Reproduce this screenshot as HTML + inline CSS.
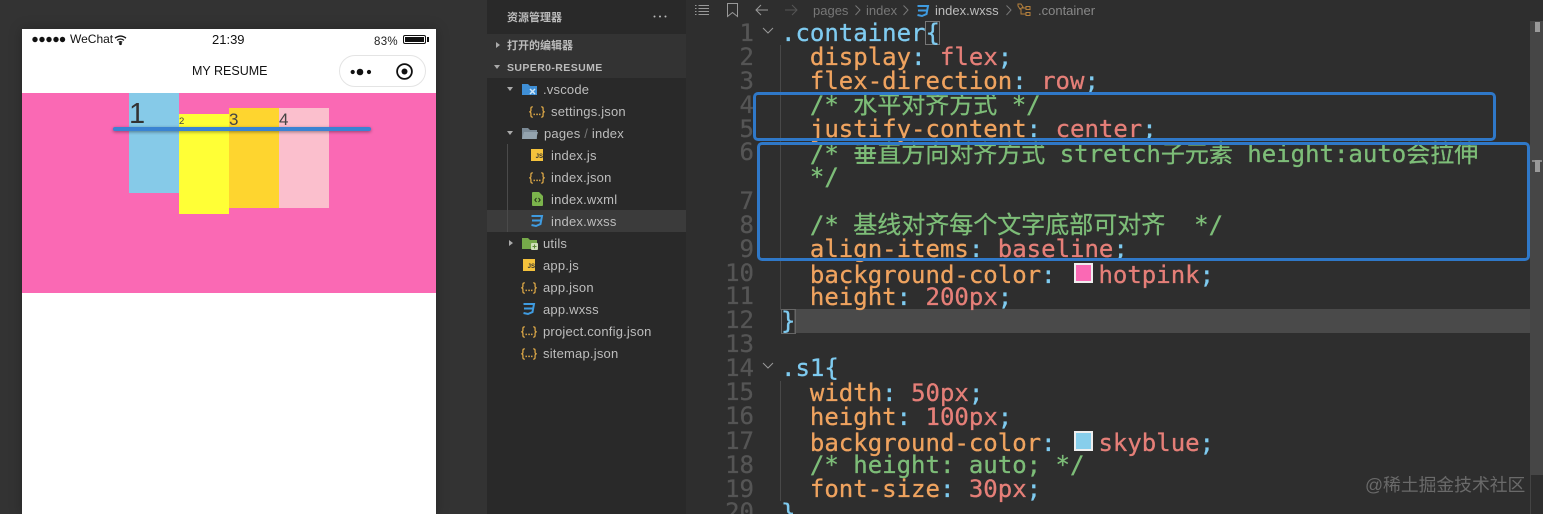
<!DOCTYPE html>
<html><head><meta charset="utf-8">
<style>
html,body{margin:0;padding:0;width:1543px;height:514px;overflow:hidden;background:#333;}
body{position:relative;font-family:"Liberation Sans","Noto Sans CJK SC",sans-serif;}
.a{position:absolute;}
.t{position:absolute;white-space:pre;}
.c{position:absolute;left:781px;white-space:pre;font:24px/24px "DejaVu Sans Mono","Noto Sans CJK SC",monospace;color:#7fcbf0;-webkit-text-stroke:.3px currentColor;}
.n{position:absolute;left:700px;width:54px;text-align:right;font:24px/24px "DejaVu Sans Mono",monospace;color:#555;-webkit-text-stroke:.3px #555;}
.p{color:#efa35f}.v{color:#e57f78}.g{color:#7dbd78}.b{color:#7fcbf0}
.f{position:absolute;white-space:pre;font-size:13px;line-height:22px;letter-spacing:.2px;color:#bdbdbd;margin-top:1px;}
.cn{position:absolute;white-space:pre;font-size:10.5px;line-height:22px;color:#bbb;font-weight:bold;margin-top:1px;}
.j{position:absolute;white-space:pre;font:12px/14px "Liberation Sans";color:#e8b04a;letter-spacing:-.5px;-webkit-text-stroke:.2px #e8b04a;}
svg{position:absolute;overflow:visible;}
</style></head><body>

<!-- phone -->
<div class="a" style="left:22px;top:29px;width:414px;height:485px;background:#fff;box-shadow:0 0 12px rgba(0,0,0,.25)"></div>
<svg style="left:32px;top:36px" width="34" height="8"><g fill="#111"><circle cx="3" cy="3.500" r="2.700"/><circle cx="10" cy="3.500" r="2.700"/><circle cx="17" cy="3.500" r="2.700"/><circle cx="24" cy="3.500" r="2.700"/><circle cx="30.500" cy="3.500" r="2.700"/></g></svg>
<div class="t" style="left:70px;top:32px;font-size:12px;line-height:15px;color:#111">WeChat</div>
<svg style="left:114px;top:35px" width="13" height="10" fill="none" stroke="#111" stroke-width="1.300"><path d="M1 3.200Q6.500-1 12 3.200M3 5.400Q6.500 2.600 10 5.400M4.800 7.300Q6.500 6 8.200 7.300"/><circle cx="6.500" cy="8.800" r=".7" fill="#111"/></svg>
<div class="t" style="left:212px;top:31px;font-size:13px;line-height:17px;color:#111">21:39</div>
<div class="t" style="left:374px;top:35px;font-size:11.500px;line-height:14px;letter-spacing:.3px;color:#222">83%</div>
<div class="a" style="left:403px;top:35px;width:21px;height:7px;border:1px solid #111;border-radius:2px;"></div>
<div class="a" style="left:405px;top:37px;width:19px;height:5px;background:#111"></div>
<div class="a" style="left:427px;top:37px;width:2px;height:5px;background:#111"></div>
<div class="t" style="left:192px;top:63px;font-size:12.500px;line-height:17px;color:#111">MY RESUME</div>
<div class="a" style="left:339px;top:55px;width:87px;height:32px;box-sizing:border-box;border:1px solid #e4e4e4;border-radius:16px;background:#fff"></div>
<svg style="left:350px;top:62px" width="22" height="18" fill="#111"><circle cx="2.700" cy="10" r="2.100"/><circle cx="10" cy="10" r="3.300"/><circle cx="19" cy="10" r="2.100"/></svg>
<svg style="left:395px;top:62px" width="20" height="20" fill="none"><circle cx="9.500" cy="9.500" r="7.400" stroke="#111" stroke-width="1.800"/><circle cx="9.500" cy="9.500" r="3" fill="#111"/></svg>

<div class="a" style="left:22px;top:93px;width:414px;height:200px;background:#fa69b4"></div>
<div class="a" style="left:129px;top:93px;width:50px;height:100px;background:#86cae8"></div>
<div class="a" style="left:179px;top:114px;width:50px;height:100px;background:#ffff36"></div>
<div class="a" style="left:229px;top:108px;width:50px;height:100px;background:#fed52f"></div>
<div class="a" style="left:279px;top:108px;width:50px;height:100px;background:#fbbfcd"></div>
<div class="t" style="left:129px;top:98px;font-size:29px;line-height:33px;color:#333">1</div>
<div class="t" style="left:179px;top:116px;font-size:9.500px;line-height:12px;color:#444">2</div>
<div class="t" style="left:229px;top:110px;font-size:17px;line-height:19px;color:#444">3</div>
<div class="t" style="left:279px;top:110px;font-size:17px;line-height:19px;color:#444">4</div>
<div class="a" style="left:113px;top:127px;width:258px;height:4px;border-radius:2px;background:#3a83d2;box-shadow:0 1px 3px rgba(0,0,0,.4)"></div>

<!-- sidebar -->
<div class="a" style="left:487px;top:0;width:199px;height:514px;background:#292929"></div>
<div class="a" style="left:487px;top:34px;width:199px;height:44px;background:#333"></div>
<div class="a" style="left:487px;top:210px;width:199px;height:22px;background:#3b3b3b"></div>
<div class="a" style="left:507px;top:144px;width:1px;height:88px;background:#4a4a4a"></div>
<div class="cn" style="left:507px;top:6px;font-size:11px">资源管理器</div>
<svg style="left:653px;top:15px" width="14" height="3" fill="#bbb"><circle cx="1.500" cy="1.500" r="1"/><circle cx="7" cy="1.500" r="1"/><circle cx="12.500" cy="1.500" r="1"/></svg>
<div class="cn" style="left:507px;top:34px;font-size:11px">打开的编辑器</div>
<div class="cn" style="left:507px;top:56px;letter-spacing:.4px">SUPER0-RESUME</div>
<svg style="left:0;top:0" width="530" height="260" fill="#aaa"><path d="M496 42l4 3-4 3zM494 65h6l-3 4zM507 87h6l-3 4zM507 131h6l-3 4zM509 240l4 3-4 3z"/></svg>

<svg style="left:522px;top:83px" width="16" height="13"><path d="M0 1h6l2 2h7v9H0z" fill="#3f8fd6"/><path d="M8 6l5 5M13 6l-5 5" stroke="#cfe6f8" stroke-width="1.500"/></svg>
<div class="f" style="left:543px;top:78px">.vscode</div>
<div class="f" style="left:551px;top:100px">settings.json</div>
<svg style="left:522px;top:127px" width="16" height="13"><path d="M0 1h6l2 2h7v9H0z" fill="#7b8a96"/><path d="M2 5h14l-2 7H0z" fill="#93a3ae"/></svg>
<div class="f" style="left:544px;top:122px">pages <span style="color:#777">/</span> index</div>
<div class="f" style="left:551px;top:144px">index.js</div>
<div class="f" style="left:551px;top:166px">index.json</div>
<div class="f" style="left:551px;top:188px">index.wxml</div>
<div class="f" style="left:551px;top:210px">index.wxss</div>
<svg style="left:522px;top:237px" width="16" height="13"><path d="M0 1h6l2 2h7v9H0z" fill="#76a94a"/><rect x="9" y="6" width="7" height="7" rx="1" fill="#cfe0b8"/><path d="M12.500 7.500v4M10.500 9.500h4" stroke="#5d8a36"/></svg>
<div class="f" style="left:543px;top:232px">utils</div>
<div class="f" style="left:543px;top:254px">app.js</div>
<div class="f" style="left:543px;top:276px">app.json</div>
<div class="f" style="left:543px;top:298px">app.wxss</div>
<div class="f" style="left:543px;top:320px">project.config.json</div>
<div class="f" style="left:543px;top:342px">sitemap.json</div>

<!-- js icons -->
<div class="a" style="left:531px;top:149px;width:12px;height:12px;background:#f4c23c;color:#333;font:bold 6px/16px 'Liberation Sans';text-align:right">JS</div>
<div class="a" style="left:523px;top:259px;width:12px;height:12px;background:#f4c23c;color:#333;font:bold 6px/16px 'Liberation Sans';text-align:right">JS</div>
<!-- json icons -->
<div class="j" style="left:529px;top:104px">{...}</div>
<div class="j" style="left:529px;top:170px">{...}</div>
<div class="j" style="left:521px;top:280px">{...}</div>
<div class="j" style="left:521px;top:324px">{...}</div>
<div class="j" style="left:521px;top:346px">{...}</div>
<!-- wxml -->
<svg style="left:532px;top:192px" width="11" height="14"><path d="M0 1q0-1 1-1h6l4 4v9q0 1-1 1H1q-1 0-1-1z" fill="#7cb44c"/><path d="M4.500 6L2.800 8l1.700 2M6.500 6l1.700 2-1.700 2" stroke="#24331a" fill="none"/></svg>
<!-- css icons -->
<svg style="left:530px;top:215px" width="13" height="12" fill="none" stroke="#3f9be0" stroke-width="2"><path d="M1.500 1h10.500l-1.500 8-4.500 2-4.500-1M2 5.500h9"/></svg>
<svg style="left:522px;top:303px" width="13" height="12" fill="none" stroke="#3f9be0" stroke-width="2"><path d="M1.500 1h10.500l-1.500 8-4.500 2-4.500-1M2 5.500h9"/></svg>

<!-- editor -->
<div class="a" style="left:686px;top:0;width:857px;height:514px;background:#2e2e2e"></div>
<div class="a" style="left:1530px;top:21px;width:13px;height:454px;background:#464646"></div>
<div class="a" style="left:1530px;top:475px;width:1px;height:39px;background:#444"></div>
<div class="a" style="left:1535px;top:22px;width:5px;height:10px;background:#9a9a9a"></div>
<div class="a" style="left:1532px;top:160px;width:10px;height:2px;background:#888"></div>
<div class="a" style="left:1535px;top:160px;width:5px;height:12px;background:#9a9a9a"></div>

<!-- top bar -->
<svg style="left:695px;top:4px" width="14" height="12" stroke="#999" fill="none"><path d="M0 1.500h1.500M3.500 1.500H14M0 4.500h1.500M3.500 4.500H14M0 7.500h1.500M3.500 7.500H14M0 10.500h1.500M3.500 10.500H14"/></svg>
<svg style="left:727px;top:3px" width="11" height="14" stroke="#999" fill="none"><path d="M.5.500h10v13l-5-4-5 4z"/></svg>
<svg style="left:755px;top:4px" width="14" height="12" stroke="#999" fill="none"><path d="M13 6H1M6 1L1 6l5 5"/></svg>
<svg style="left:784px;top:4px" width="14" height="12" stroke="#555" fill="none"><path d="M1 6h12M8 1l5 5-5 5"/></svg>
<div class="t" style="left:813px;top:2px;font-size:13px;line-height:17px;color:#777">pages</div>
<svg style="left:855px;top:5px" width="6" height="11" stroke="#777" fill="none"><path d="M.5.500l4.500 4.500L.5 10"/></svg>
<div class="t" style="left:866px;top:2px;font-size:13px;line-height:17px;color:#777">index</div>
<svg style="left:903px;top:5px" width="6" height="11" stroke="#777" fill="none"><path d="M.5.500l4.500 4.500L.5 10"/></svg>
<svg style="left:916px;top:5px" width="13" height="12" fill="none" stroke="#3f9be0" stroke-width="2"><path d="M1.500 1h10.500l-1.500 8-4.500 2-4.500-1M2 5.500h9"/></svg>
<div class="t" style="left:935px;top:2px;font-size:13px;line-height:17px;color:#bdbdbd">index.wxss</div>
<svg style="left:1006px;top:5px" width="6" height="11" stroke="#777" fill="none"><path d="M.5.500l4.500 4.500L.5 10"/></svg>
<svg style="left:1017px;top:3px" width="15" height="14" stroke="#b5803c" fill="none"><path d="M1 1l3-0 2 3-3 2-2-3zM4 6v5h5M9 5H5M9 3.500h4v3H9zM9 9.500h4v3H9z"/></svg>
<div class="t" style="left:1038px;top:2px;font-size:13px;line-height:17px;color:#888">.container</div>

<!-- current line highlight -->
<div class="a" style="left:794px;top:309px;width:736px;height:24px;background:#4a4a4a"></div>
<div class="a" style="left:781px;top:309px;width:13px;height:23px;border:1px solid #666"></div>
<div class="a" style="left:925px;top:21px;width:13px;height:22px;border:1px solid #777"></div>
<!-- indent guides -->
<div class="a" style="left:780px;top:45px;width:1px;height:265px;background:#484848"></div>
<div class="a" style="left:780px;top:381px;width:1px;height:120px;background:#484848"></div>
<svg style="left:762px;top:27px" width="12" height="7" stroke="#999" fill="none"><path d="M1 1l5 5 5-5"/></svg>
<svg style="left:762px;top:362px" width="12" height="7" stroke="#999" fill="none"><path d="M1 1l5 5 5-5"/></svg>

<!-- line numbers -->
<div class="n" style="top:21px">1</div><div class="n" style="top:45px">2</div><div class="n" style="top:69px">3</div><div class="n" style="top:93px">4</div><div class="n" style="top:117px">5</div><div class="n" style="top:140px">6</div><div class="n" style="top:189px">7</div><div class="n" style="top:213px">8</div><div class="n" style="top:237px">9</div><div class="n" style="top:261px">10</div><div class="n" style="top:284px">11</div><div class="n" style="top:308px">12</div><div class="n" style="top:332px">13</div><div class="n" style="top:356px">14</div><div class="n" style="top:380px">15</div><div class="n" style="top:404px">16</div><div class="n" style="top:429px">17</div><div class="n" style="top:453px">18</div><div class="n" style="top:477px">19</div><div class="n" style="top:500px">20</div>

<!-- code -->
<div class="c" style="top:21px">.container{</div>
<div class="c" style="top:45px">  <span class="p">display</span>: <span class="v">flex</span>;</div>
<div class="c" style="top:69px">  <span class="p">flex-direction</span>: <span class="v">row</span>;</div>
<div class="c g" style="top:93px">  /* 水平对齐方式 */</div>
<div class="c" style="top:117px">  <span class="p">justify-content</span>: <span class="v">center</span>;</div>
<div class="c g" style="top:142px">  /* 垂直方向对齐方式 stretch子元素 height:auto会拉伸</div>
<div class="c g" style="top:165px">  */</div>
<div class="c g" style="top:213px">  /* 基线对齐每个文字底部可对齐  */</div>
<div class="c" style="top:237px">  <span class="p">align-items</span>: <span class="v">baseline</span>;</div>
<div class="c" style="top:263px">  <span class="p">background-color</span>:  <span style="display:inline-block;width:14px"></span><span class="v">hotpink</span>;</div>
<div class="c" style="top:285px">  <span class="p">height</span>: <span class="v">200px</span>;</div>
<div class="c" style="top:309px">}</div>
<div class="c" style="top:356px">.s1{</div>
<div class="c" style="top:381px">  <span class="p">width</span>: <span class="v">50px</span>;</div>
<div class="c" style="top:405px">  <span class="p">height</span>: <span class="v">100px</span>;</div>
<div class="c" style="top:431px">  <span class="p">background-color</span>:  <span style="display:inline-block;width:14px"></span><span class="v">skyblue</span>;</div>
<div class="c g" style="top:453px">  /* height: auto; */</div>
<div class="c" style="top:477px">  <span class="p">font-size</span>: <span class="v">30px</span>;</div>
<div class="c" style="top:501px">}</div>

<!-- colour swatches -->
<div class="a" style="left:1074px;top:263px;width:19px;height:20px;box-sizing:border-box;border:2px solid #eee;background:#fa69b4"></div>
<div class="a" style="left:1074px;top:431px;width:19px;height:20px;box-sizing:border-box;border:2px solid #eee;background:#87ceeb"></div>

<!-- annotation boxes -->
<div class="a" style="left:753px;top:92px;width:743px;height:49px;box-sizing:border-box;border:3px solid #2f78c8;border-radius:5px"></div>
<div class="a" style="left:757px;top:142px;width:773px;height:119px;box-sizing:border-box;border:3px solid #2f78c8;border-radius:5px"></div>

<!-- watermark -->
<div class="t" style="left:1365px;top:474px;font-size:17.800px;line-height:22px;color:#6a6a6a">@稀土掘金技术社区</div>
</body></html>
